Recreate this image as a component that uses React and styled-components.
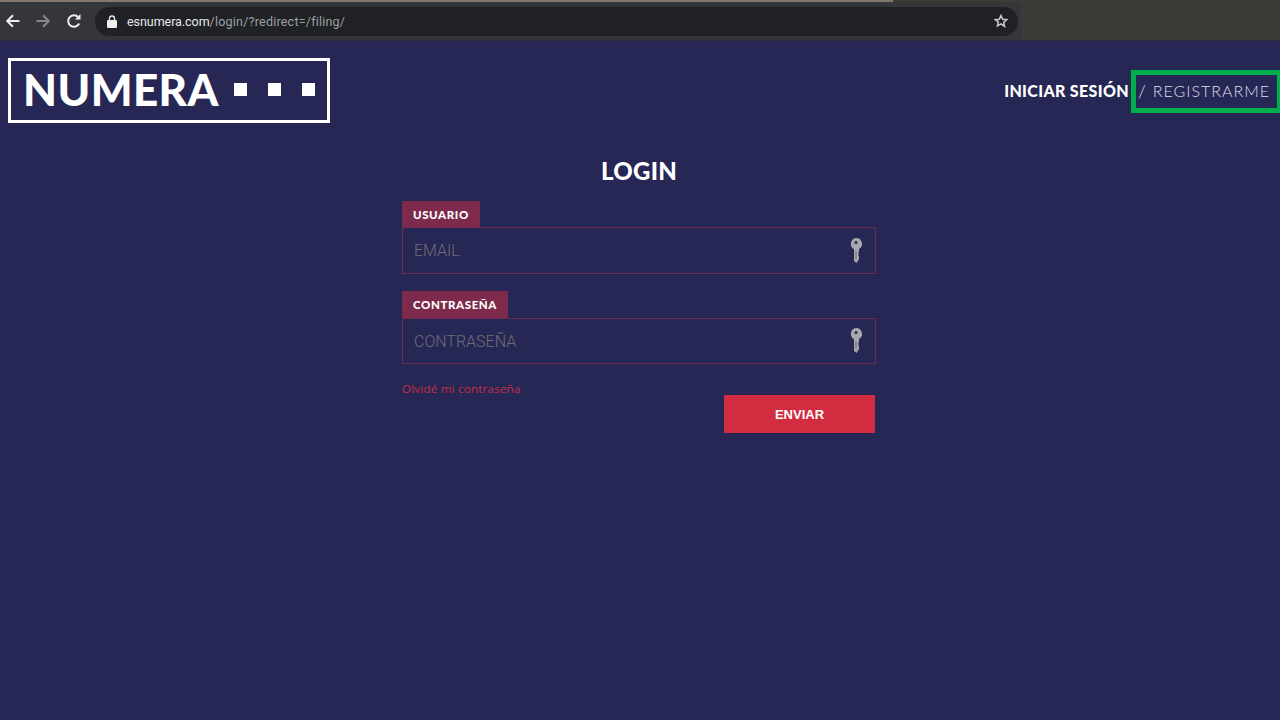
import React from "react";
import styled, { createGlobalStyle } from "styled-components";

const Global = createGlobalStyle`
  html, body { margin: 0; padding: 0; background: #262755; height: 100%; }
  body { font-family: "Lato", "Liberation Sans", sans-serif; overflow: hidden; }
  * { box-sizing: border-box; }
`;
const Page = styled.div`width: 1280px; height: 720px; background: #262755; display: flex; flex-direction: column;`;
const Chrome = styled.div`height: 41px; display: flex; flex-direction: column; background: #3c3b38; border-bottom: 1px solid #2c2c30;`;
const TopStrip = styled.div`width: 893px; height: 2px; background: #84786a; flex: none;`;
const ChromeRow = styled.div`flex: 1; display: flex; align-items: center; width: 1021px; background: #35363a;`;
const NavBtn = styled.div`
  width: 16px; height: 16px; margin-left: ${p => p.$ml}px; display: flex; color: ${p => p.$dim ? "#85878a" : "#eceef0"};
`;
const Omni = styled.div`
  margin-left: 13px; width: 923px; height: 29px; border-radius: 15px; background: #202124;
  display: flex; align-items: center; padding: 0 10px 0 12px; font-size: 12.5px;
  font-family: "Roboto", "Liberation Sans", sans-serif;
`;
const Domain = styled.span`color: #e8eaed; margin-left: 10px; letter-spacing: -0.05px;`;
const UrlPath = styled.span`color: #9aa0a6; flex: 1; letter-spacing: 0.22px;`;
const Header = styled.header`display: flex; justify-content: space-between; align-items: flex-start; padding: 17px 0 0 8px;`;
const Logo = styled.div`
  width: 322px; height: 65px; border: 3px solid #fff; display: flex; align-items: center; padding-left: 12px; color: #fff;
`;
const LogoText = styled.span`font-size: 44px; font-weight: 900; letter-spacing: 0.4px; line-height: 1; margin-top: -3px; width: 199px;`;
const Dots = styled.span`display: flex; gap: 21px; margin-left: 12px; margin-top: -2px;`;
const Dot = styled.i`width: 13px; height: 13px; background: #fff; display: block;`;
const Nav = styled.nav`display: flex; align-items: center; margin-top: 12px; color: #fff;`;
const Strong = styled.span`font-size: 16px; font-weight: 900; letter-spacing: 0.35px; margin-right: 2px; margin-top: -2px;`;
const Highlight = styled.div`
  width: 149px; height: 43px; border: 5px solid #00ae4e; border-right-width: 3px;
  display: flex; align-items: center; justify-content: space-between; padding: 0 7px 0 2px;
  font-size: 16px; font-weight: 300; color: #dcdeec; letter-spacing: 1px;
`;
const Slash = styled.span`font-size: 18px; margin-top: -2px;`;
const Label = styled.span`margin-top: -2px;`;
const Main = styled.main`width: 474px; margin: 33px 0 0 402px; display: flex; flex-direction: column;`;
const Title = styled.h1`
  margin: 0 0 16px 0; font-size: 24px; line-height: 29px; font-weight: 900; color: #fff; text-align: center; letter-spacing: 0.3px;
`;
const Field = styled.div`display: flex; flex-direction: column; margin-bottom: ${p => p.$mb}px;`;
const Tag = styled.label`
  align-self: flex-start; height: ${p => p.$h}px; padding: 0 11px; background: #7e2a4c; color: #fff; display: flex; align-items: center;
  font-size: 11.5px; font-weight: 900; letter-spacing: 0.6px;
`;
const InputBox = styled.div`
  height: ${p => p.$h}px; border: 1px solid #6e2a50; display: flex; align-items: center; justify-content: space-between; padding: 0 13px 0 11px;
`;
const Placeholder = styled.span`color: #6e6e76; font-size: 16px; font-weight: 300; font-family: "Roboto", "Liberation Sans", sans-serif;`;
const Forgot = styled.a`color: #c92c44; font-size: 11.5px; font-family: "Open Sans", "Liberation Sans", sans-serif; letter-spacing: 0.25px; line-height: 14px;`;
const Actions = styled.div`display: flex; justify-content: flex-end; margin-top: -1px; padding-right: 1px;`;
const Submit = styled.button`
  width: 151px; height: 38px; border: 0; background: #d22c41; color: #fff; font: 700 13px "Liberation Sans", sans-serif;
`;

const Back = () => (
  <svg viewBox="0 0 16 16" fill="none" stroke="currentColor" strokeWidth="2"><path d="M14.500 8H2.500M8 2.200 2.200 8 8 13.800" /></svg>
);
const Forward = () => (
  <svg viewBox="0 0 16 16" fill="none" stroke="currentColor" strokeWidth="2"><path d="M1.500 8h12M8 2.200 13.800 8 8 13.800" /></svg>
);
const Reload = () => (
  <svg viewBox="0 0 16 16" fill="none" stroke="currentColor" strokeWidth="2"><path d="M13.200 10.500A5.800 5.800 0 1 1 12.200 4" /><path d="M14.500 1v5.500H9z" fill="currentColor" stroke="none" /></svg>
);
const Lock = () => (
  <svg width="10" height="13" viewBox="0 0 10 13" fill="#eceef0"><path d="M1 5h8a1 1 0 0 1 1 1v6a1 1 0 0 1-1 1H1a1 1 0 0 1-1-1V6a1 1 0 0 1 1-1z" /><path d="M2.500 5.500V3.500a2.500 2.500 0 0 1 5 0v2" fill="none" stroke="#eceef0" strokeWidth="1.300" /></svg>
);
const Star = () => (
  <svg width="14" height="14" viewBox="0 0 24 24" fill="none" stroke="#c8cacc" strokeWidth="2.600"><path d="M12 2.500l2.900 6.400 7 .8-5.200 4.700 1.400 6.900L12 16.900l-6.100 3.400 1.400-6.900L2.100 9.700l7-.8z" /></svg>
);
const Key = () => (
  <svg width="12" height="26" viewBox="0 0 12 26" fill="#a8a8ac">
    <path fillRule="evenodd" d="M6 0a6 6 0 0 1 3 11.200V14l-1 1 1 1-1 1 1 1v3l-2.500 4L4 23V11.200A6 6 0 0 1 6 0zm0 3a1.500 1.500 0 1 0 0 3 1.500 1.500 0 0 0 0-3z" />
    <path d="M6 13v8" stroke="#6a6a78" strokeWidth="1" />
  </svg>
);

export default function App() {
  return (
    <Page>
      <Global />
      <Chrome>
        <TopStrip />
        <ChromeRow>
          <NavBtn $ml={5}><Back /></NavBtn>
          <NavBtn $ml={14} $dim><Forward /></NavBtn>
          <NavBtn $ml={15}><Reload /></NavBtn>
          <Omni>
            <Lock />
            <Domain>esnumera.com</Domain>
            <UrlPath>/login/?redirect=/filing/</UrlPath>
            <Star />
          </Omni>
        </ChromeRow>
      </Chrome>
      <Header>
        <Logo>
          <LogoText>NUMERA</LogoText>
          <Dots><Dot /><Dot /><Dot /></Dots>
        </Logo>
        <Nav>
          <Strong>INICIAR SESIÓN</Strong>
          <Highlight><Slash>/</Slash><Label>REGISTRARME</Label></Highlight>
        </Nav>
      </Header>
      <Main>
        <Title>LOGIN</Title>
        <Field $mb={17}>
          <Tag $h={26}>USUARIO</Tag>
          <InputBox $h={47}>
            <Placeholder>EMAIL</Placeholder>
            <Key />
          </InputBox>
        </Field>
        <Field $mb={18}>
          <Tag $h={27}>CONTRASEÑA</Tag>
          <InputBox $h={46}>
            <Placeholder>CONTRASEÑA</Placeholder>
            <Key />
          </InputBox>
        </Field>
        <Forgot>Olvidé mi contraseña</Forgot>
        <Actions><Submit>ENVIAR</Submit></Actions>
      </Main>
    </Page>
  );
}
